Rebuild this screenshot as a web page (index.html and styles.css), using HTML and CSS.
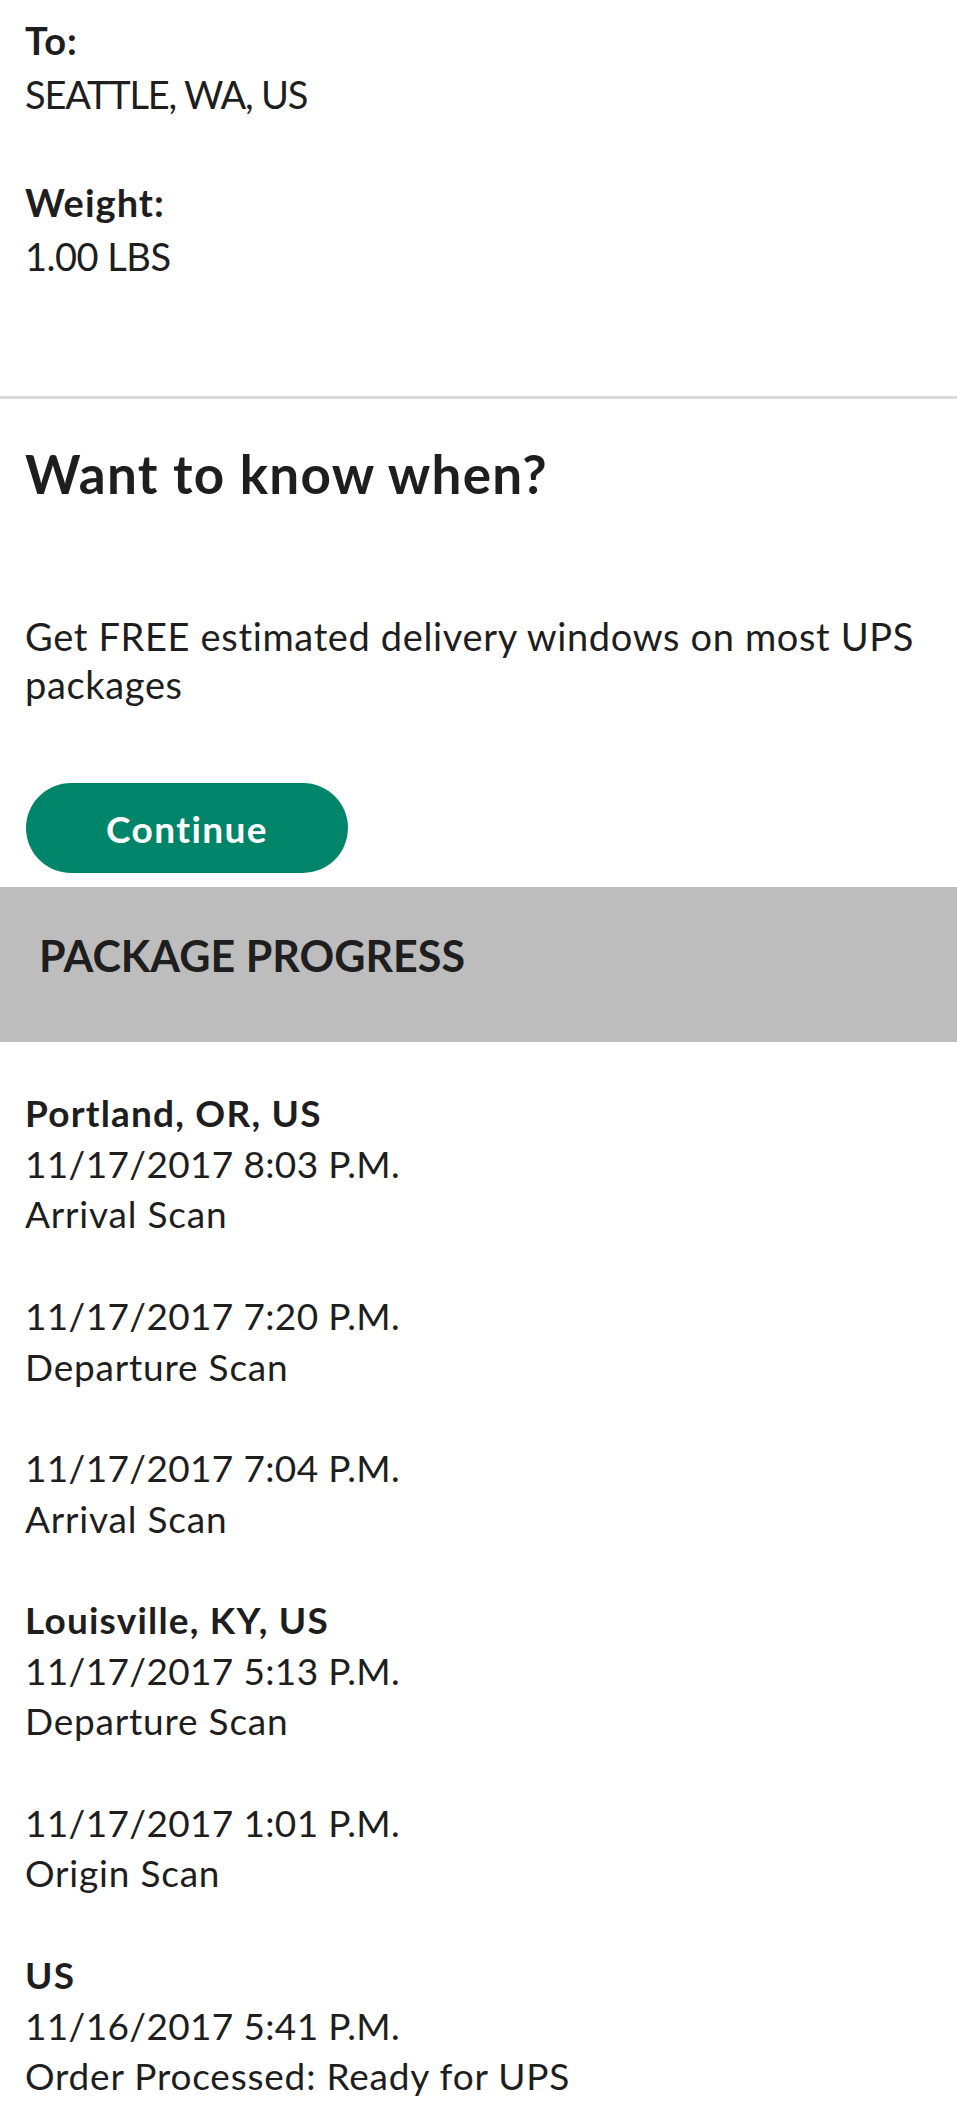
FILE: index.html
```html
<!DOCTYPE html>
<html lang="en">
<head>
<meta charset="utf-8">
<title>Package Tracking</title>
<link rel="stylesheet" href="styles.css">
</head>
<body>
<section class="details">
  <div class="field">
    <div class="label">To:</div>
    <div class="value value-place">SEATTLE, WA, US</div>
  </div>
  <div class="field">
    <div class="label">Weight:</div>
    <div class="value">1.00 LBS</div>
  </div>
</section>
<hr class="divider">
<section class="promo">
  <h2 class="promo-title">Want to know when?</h2>
  <p class="promo-text">Get FREE estimated delivery windows on most UPS packages</p>
  <button class="btn-continue" type="button">Continue</button>
</section>
<div class="band">
  <h3 class="band-title">PACKAGE PROGRESS</h3>
</div>
<div class="progress">
  <div class="event">
    <div class="loc">Portland, OR, US</div>
    <div class="when">11/17/2017 8:03 P.M.</div>
    <div class="status">Arrival Scan</div>
  </div>
  <div class="event">
    <div class="when">11/17/2017 7:20 P.M.</div>
    <div class="status">Departure Scan</div>
  </div>
  <div class="event">
    <div class="when">11/17/2017 7:04 P.M.</div>
    <div class="status">Arrival Scan</div>
  </div>
  <div class="event">
    <div class="loc">Louisville, KY, US</div>
    <div class="when">11/17/2017 5:13 P.M.</div>
    <div class="status">Departure Scan</div>
  </div>
  <div class="event">
    <div class="when">11/17/2017 1:01 P.M.</div>
    <div class="status">Origin Scan</div>
  </div>
  <div class="event">
    <div class="loc">US</div>
    <div class="when">11/16/2017 5:41 P.M.</div>
    <div class="status">Order Processed: Ready for UPS</div>
  </div>
</div>
</body>
</html>
```
FILE: styles.css
```css
* { box-sizing: border-box; }
html, body {
  margin: 0;
  padding: 0;
  background: #ffffff;
}
body {
  font-family: Lato, "Open Sans", "Liberation Sans", sans-serif;
  color: #1e1e1e;
  width: 957px;
}
.details {
  padding: 13px 0 113px 25px;
  font-size: 38px;
  line-height: 54px;
}
.field + .field { margin-top: 54px; }
.label {
  font-weight: 700;
  letter-spacing: 1px;
}
.value {
  font-weight: 400;
  letter-spacing: -0.5px;
}
.value-place { letter-spacing: -1.2px; }

.divider {
  margin: 0;
  border: 0;
  height: 3px;
  background: #dadada;
}

.promo {
  padding: 43px 0 0 25px;
}
.promo-title {
  margin: 0;
  font-size: 53px;
  line-height: 64px;
  font-weight: 700;
  letter-spacing: 1.3px;
}
.promo-text {
  margin: 106px 0 0;
  font-size: 38px;
  line-height: 48px;
  font-weight: 400;
  letter-spacing: 0.65px;
  padding-right: 20px;
}
.btn-continue {
  display: block;
  margin: 75px 0 0 1px;
  width: 322px;
  height: 90px;
  border: 0;
  border-radius: 45px;
  background: #00856a;
  color: #ffffff;
  font-family: inherit;
  font-size: 37px;
  font-weight: 700;
  letter-spacing: 1.4px;
  padding: 0;
}

.band {
  margin-top: 14px;
  height: 155px;
  background: #bdbdbd;
  padding: 43px 0 0 39px;
}
.band-title {
  margin: 0;
  font-size: 43px;
  line-height: 52px;
  font-weight: 700;
  color: #1e1e1e;
}

.progress {
  padding: 46px 0 0 25px;
  font-size: 37px;
  line-height: 50.7px;
}
.event + .event { margin-top: 50.7px; }
.loc {
  font-weight: 700;
  letter-spacing: 1.2px;
}
.when { letter-spacing: 0.35px; }
.status { letter-spacing: 0.8px; }
```
